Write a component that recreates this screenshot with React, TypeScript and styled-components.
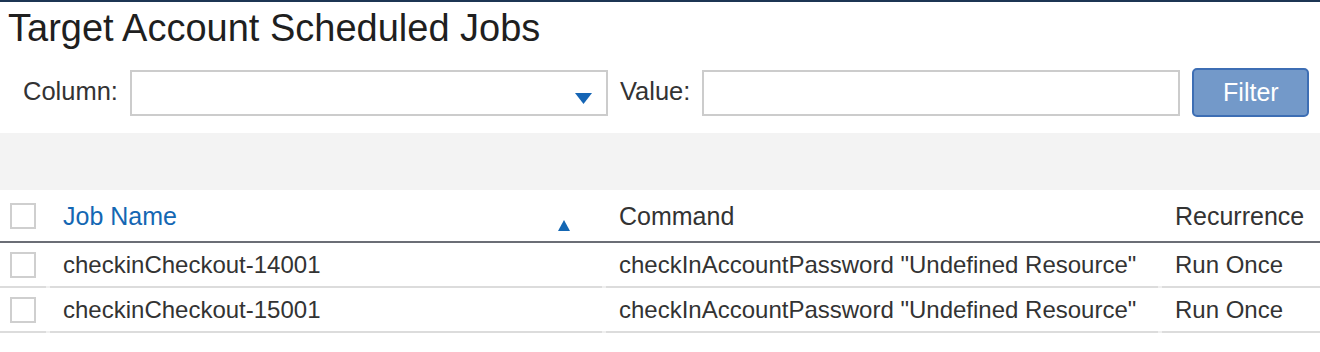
import React from "react";
import styled, { createGlobalStyle } from "styled-components";

const Global = createGlobalStyle`
  html, body { margin: 0; padding: 0; background: #ffffff; }
  body { font-family: "Liberation Sans", Arial, sans-serif; color: #333333; }
  * { box-sizing: border-box; }
`;

const Page = styled.div`
  width: 1320px;
  border-top: 2px solid #1c3553;
`;

const Title = styled.h1`
  margin: 0;
  padding: 4px 8px 0;
  font-size: 38px;
  line-height: 44px;
  font-weight: normal;
  color: #1f1f1f;
`;

const FilterRow = styled.div`
  display: flex;
  align-items: center;
  gap: 12px;
  height: 50px;
  margin-top: 18px;
  padding-left: 23px;
`;

const Label = styled.span`
  font-size: 25.5px;
  color: #333333;
  line-height: 28px;
  margin-top: -4px;
`;

const Field = styled.div<{ $w: number }>`
  width: ${(p) => p.$w}px;
  height: 46px;
  border: 2px solid #cccccc;
  background: #ffffff;
  display: flex;
  justify-content: flex-end;
  align-items: flex-end;
  padding: 0 14px 10px 0;
`;

const Button = styled.button`
  width: 117px;
  height: 49px;
  margin-top: -1px;
  background: #7399c9;
  border: 2px solid #3d6eb4;
  border-radius: 5px;
  color: #ffffff;
  font-family: "Liberation Sans", Arial, sans-serif;
  font-size: 25px;
  padding: 0;
`;

const Band = styled.div`
  height: 57px;
  margin-top: 15px;
  background: #f3f3f3;
`;

const Row = styled.div<{ $head?: boolean }>`
  display: grid;
  grid-template-columns: 46px 552px 552px 1fr;
  column-gap: 4px;
  height: ${(p) => (p.$head ? 53 : 45)}px;
  border-bottom: 2px solid ${(p) => (p.$head ? "#6b6e76" : "#efefef")};
`;

const Cell = styled.div<{ $head?: boolean; $active?: boolean }>`
  display: flex;
  align-items: center;
  justify-content: space-between;
  padding-left: 13px;
  font-size: ${(p) => (p.$head ? 25 : 24)}px;
  line-height: 28px;
  white-space: nowrap;
  color: ${(p) => (p.$active ? "#1467b3" : "#333333")};
  box-shadow: ${(p) => (p.$head ? "none" : "0 2px 0 #dcdcdc")};
`;

const CheckCell = styled(Cell)`
  padding-left: 10px;
`;

const Box = styled.span`
  width: 26px;
  height: 26px;
  border: 2px solid #cfcfcf;
  background: #ffffff;
`;

const SortIcon = styled.svg`
  align-self: flex-end;
  margin: 0 32px 10px 0;
`;

const rows = [
  { name: "checkinCheckout-14001", cmd: 'checkInAccountPassword "Undefined Resource"', rec: "Run Once" },
  { name: "checkinCheckout-15001", cmd: 'checkInAccountPassword "Undefined Resource"', rec: "Run Once" },
];

export default function App() {
  return (
    <Page>
      <Global />
      <Title>Target Account Scheduled Jobs</Title>
      <FilterRow>
        <Label>Column:</Label>
        <Field $w={478}>
          <svg width="17" height="11" viewBox="0 0 17 11">
            <polygon points="0,0 17,0 8.5,11" fill="#1565b5" />
          </svg>
        </Field>
        <Label>Value:</Label>
        <Field $w={478} />
        <Button>Filter</Button>
      </FilterRow>
      <Band />
      <Row $head>
        <CheckCell $head>
          <Box />
        </CheckCell>
        <Cell $head $active>
          Job Name
          <SortIcon width="12" height="11" viewBox="0 0 12 11">
            <polygon points="6,0 12,11 0,11" fill="#1467b3" />
          </SortIcon>
        </Cell>
        <Cell $head>Command</Cell>
        <Cell $head>Recurrence</Cell>
      </Row>
      {rows.map((r) => (
        <Row key={r.name}>
          <CheckCell>
            <Box />
          </CheckCell>
          <Cell>{r.name}</Cell>
          <Cell>{r.cmd}</Cell>
          <Cell>{r.rec}</Cell>
        </Row>
      ))}
    </Page>
  );
}
